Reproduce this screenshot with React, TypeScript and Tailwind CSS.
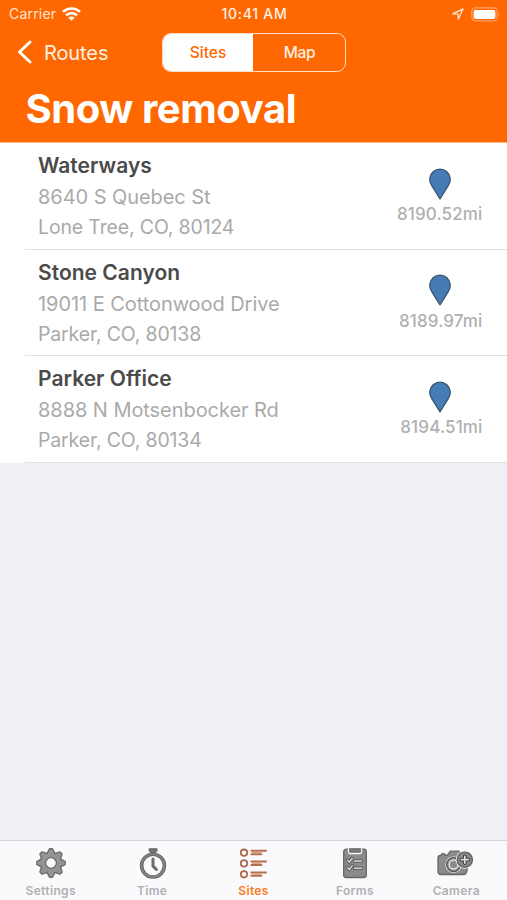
import React from 'react';

interface Site {
  name: string;
  street: string;
  city: string;
  distance: string;
}

interface TabItem {
  label: string;
  icon: React.ReactNode;
  active?: boolean;
}

const sites: Site[] = [
  { name: 'Waterways', street: '8640 S Quebec St', city: 'Lone Tree, CO, 80124', distance: '8190.52mi' },
  { name: 'Stone Canyon', street: '19011 E Cottonwood Drive', city: 'Parker, CO, 80138', distance: '8189.97mi' },
  { name: 'Parker Office', street: '8888 N Motsenbocker Rd', city: 'Parker, CO, 80134', distance: '8194.51mi' },
];

const teeth = [0, 45, 90, 135, 180, 225, 270, 315];

const GearIcon = () => (
  <svg width="32" height="32" viewBox="-16 -16 32 32">
    <g fill="#6a6a6a" stroke="#6a6a6a" strokeWidth="2.4" strokeLinejoin="round">
      {teeth.map((a) => (
        <path key={a} d="M-3.6 -9 L-1.2 -13.7 H1.2 L3.6 -9Z" transform={`rotate(${a})`} />
      ))}
      <circle r="9.6" />
    </g>
    <g fill="#949494" stroke="#949494" strokeLinejoin="round">
      {teeth.map((a) => (
        <path key={a} d="M-3 -8 L-1.1 -13.1 H1.1 L3 -8Z" transform={`rotate(${a})`} />
      ))}
      <circle r="9.1" />
    </g>
    <circle r="5.4" fill="#fafafc" stroke="#6a6a6a" strokeWidth="1.3" />
  </svg>
);

const StopwatchIcon = () => (
  <svg width="32" height="32" viewBox="-1 0 32 32" fill="none">
    <path d="M12.3 1.8h7.6v2.4h-1.6v4h-4.4v-4h-1.6z" fill="#777" stroke="#666" strokeWidth="1.2" strokeLinejoin="round" />
    <circle cx="16" cy="18.6" r="11.4" stroke="#666" strokeWidth="3.6" />
    <circle cx="16" cy="18.6" r="11.4" stroke="#858585" strokeWidth="1.6" />
    <path d="M16 12v7.2l3.4 3.3" stroke="#6c6c6c" strokeWidth="3" strokeLinecap="round" strokeLinejoin="round" />
  </svg>
);

const SitesIcon = () => (
  <svg width="32" height="32" viewBox="0 0 32 32" fill="none">
    {[5.7, 16.4, 27.3].map((y) => (
      <g key={y} transform={`translate(0 ${y})`}>
        <circle cx="7" cy="0" r="3.2" stroke="#b06a4a" strokeWidth="1.8" />
        <path d="M14.4 -1.9H29M14.4 1.5H24.4" stroke="#b56e50" strokeWidth="2" strokeLinecap="round" />
        <path d="M14.8 -0.2H24.4" stroke="#dd9b7c" strokeWidth="1.4" />
      </g>
    ))}
  </svg>
);

const FormsIcon = () => (
  <svg width="32" height="32" viewBox="0 0 32 32" fill="none">
    <rect x="4.7" y="2.2" width="22.6" height="28.3" rx="2.5" fill="#8b8b8b" stroke="#666" strokeWidth="1.3" />
    <path d="M9.5 1.5v3.6q0 1.4 1.4 1.4h10.2q1.4 0 1.4-1.4V1.5" fill="#8b8b8b" stroke="#fafafc" strokeWidth="1.3" />
    <path d="M10.8 2h10.4v3H10.8z" fill="#808080" stroke="#666" />
    <path d="M15.5 14h7M15.5 21.3h7" stroke="#5f5f5f" strokeWidth="3.6" strokeLinecap="round" />
    <path d="M15.5 14h7M15.5 21.3h7" stroke="#d6d6d6" strokeWidth="1.5" strokeLinecap="round" />
    <path d="M8.5 13.1l1.7 2 3-3.8M8.5 20.4l1.7 2 3-3.8" stroke="#5f5f5f" strokeWidth="3.4" strokeLinecap="round" />
    <path d="M8.5 13.1l1.7 2 3-3.8M8.5 20.4l1.7 2 3-3.8" stroke="#dedede" strokeWidth="1.3" strokeLinecap="round" />
  </svg>
);

const CameraIcon = () => (
  <svg width="38" height="32" viewBox="0 0 38 32" fill="none">
    <path
      d="M3.5 8.3h1V6.8h3.4v1.5h2.2l3.2-4.1h8.4l3 4h5.4v15.6q-1 3.7-3.6 3.7H4q-3 0-3-3V11q0-2.7 2.5-2.7z"
      fill="#8b8b8b"
      stroke="#666"
      strokeWidth="1.3"
      strokeLinejoin="round"
    />
    <circle cx="16.6" cy="17.6" r="8.2" fill="#fafafc" />
    <circle cx="16.6" cy="17.6" r="7" fill="#8f8f8f" stroke="#555" strokeWidth="1.3" />
    <circle cx="16.6" cy="17.6" r="4.4" fill="#8b8b8b" stroke="#e6e6e6" strokeWidth="1.3" />
    <circle cx="27.8" cy="12.7" r="9" fill="#fafafc" />
    <circle cx="27.8" cy="12.7" r="7.6" fill="#8b8b8b" stroke="#5f5f5f" strokeWidth="1.4" />
    <path d="M27.8 9.3v6.8M24.4 12.7h6.8" stroke="#444" strokeWidth="3.8" strokeLinecap="round" />
    <path d="M27.8 9.3v6.8M24.4 12.7h6.8" stroke="#dedede" strokeWidth="1.7" strokeLinecap="round" />
  </svg>
);

const tabs: TabItem[] = [
  { label: 'Settings', icon: <GearIcon /> },
  { label: 'Time', icon: <StopwatchIcon /> },
  { label: 'Sites', icon: <SitesIcon />, active: true },
  { label: 'Forms', icon: <FormsIcon /> },
  { label: 'Camera', icon: <CameraIcon /> },
];

const StatusBar = () => (
  <div className="grid h-7 grid-cols-3 items-center pl-[9px] pr-[7px] text-[14px] leading-7">
    <div className="flex items-center gap-[6px]">
      <span className="tracking-[0.2px] text-[#ffe6d4]">Carrier</span>
      <svg width="19" height="14" viewBox="0 0 19 14" fill="none" stroke="#fff" strokeWidth="2.6">
        <path d="M1 4.9a12.2 12.2 0 0 1 17 0" />
        <path d="M4 8.4a7.8 7.8 0 0 1 11 0" />
        <path d="M9.5 13.8 6.4 10.7a4.4 4.4 0 0 1 6.2 0z" fill="#fff" stroke="none" />
      </svg>
    </div>
    <div className="text-center font-medium tracking-[0.7px] text-[#fff0e5]">10:41 AM</div>
    <div className="flex items-center justify-end gap-[7px]">
      <svg width="12" height="12" viewBox="0 0 12 12" fill="none" stroke="#ffe0cc" strokeWidth="1.4" strokeLinejoin="round">
        <path d="M1 5.7 11 1 6.4 11 5.9 6.1z" />
      </svg>
      <svg width="29" height="15" viewBox="0 0 29 15">
        <rect x="0.8" y="0.9" width="25.4" height="13" rx="3.8" fill="none" stroke="#ffa366" strokeWidth="1.2" />
        <rect x="2.6" y="2.9" width="21.8" height="9" rx="2" fill="#fff" />
        <path d="M27.5 5.2q1.6 2.2 0 4.5z" fill="#ffa366" />
      </svg>
    </div>
  </div>
);

const Header = () => (
  <header className="h-[143px] shrink-0 border-b border-[#ffb27d] bg-[#ff6700] text-white">
    <StatusBar />
    <div className="flex h-12 items-center pl-[17px]">
      <button className="flex w-[145px] items-center gap-[12px] text-[20px] leading-6 tracking-[-0.1px] text-[#fff0e5]">
        <svg width="15" height="24" viewBox="0 0 15 24" fill="none" stroke="#fff" strokeWidth="2.9" strokeLinecap="round" strokeLinejoin="round">
          <path d="M13 2 2.5 12 13 22" />
        </svg>
        <span className="pt-px">Routes</span>
      </button>
      <div className="flex h-[39px] w-[184px] overflow-hidden rounded-[9px] border-[1.5px] border-[#ffdcc4] text-[15.5px] font-medium">
        <button className="w-[90px] bg-white pt-[2px] text-[#ff6700]">Sites</button>
        <button className="flex-1 pl-px pt-[2px] tracking-[-0.3px] text-[#fff0e5]">Map</button>
      </div>
    </div>
    <h1 className="pl-[25.5px] pt-[8px] text-[40px] font-bold leading-[50px] tracking-[-0.42px]">Snow removal</h1>
  </header>
);

const SiteRow: React.FC<{ site: Site }> = ({ site }) => (
  <li className="bg-white pl-[25px]">
    <div className="flex h-[106.6px] justify-between border-b border-[#e2e2e4] pl-[13px] pr-[24.5px] pt-2">
      <div className="text-[20px] leading-[30px] tracking-[-0.06px] text-[#aaa]">
        <div className="mb-px text-[21px] font-semibold tracking-[0.02px] text-[#4a4a4a]">{site.name}</div>
        <div>{site.street}</div>
        <div className="text-[19.5px] tracking-[-0.15px]">{site.city}</div>
      </div>
      <div className="flex w-[86px] flex-col pt-[15.5px]">
        <svg className="self-center" width="24" height="34" viewBox="0 0 24 34">
          <path
            d="M12 32 L3.6 18.4 A10.3 10.3 0 1 1 20.4 18.4 L12 32z"
            fill="#467cb5"
            stroke="#35506b"
            strokeWidth="1.2"
            strokeLinejoin="round"
          />
        </svg>
        <div className="mt-[1.5px] text-right text-[17px] font-medium leading-6 tracking-[0.14px] text-[#b0b0b0]">
          {site.distance}
        </div>
      </div>
    </div>
  </li>
);

const TabBar = () => (
  <nav className="grid h-[60px] shrink-0 grid-cols-5 border-t border-[#d5d5d9] bg-[#fafafc]">
    {tabs.map((tab) => (
      <button key={tab.label} className="flex flex-col items-center pt-[6px]">
        {tab.icon}
        <span
          className={`text-[12px] font-semibold leading-[14px] tracking-[0.35px] mt-[5px] ${
            tab.active ? 'text-[#ff7a22]' : 'text-[#b0b0b2]'
          }`}
        >
          {tab.label}
        </span>
      </button>
    ))}
  </nav>
);

export default function App() {
  return (
    <div className="flex h-screen w-full flex-col overflow-hidden bg-[#f0eff5] font-['Inter','Liberation_Sans',sans-serif]">
      <Header />
      <ul className="flex-1">
        {sites.map((site) => (
          <SiteRow key={site.name} site={site} />
        ))}
      </ul>
      <TabBar />
    </div>
  );
}
